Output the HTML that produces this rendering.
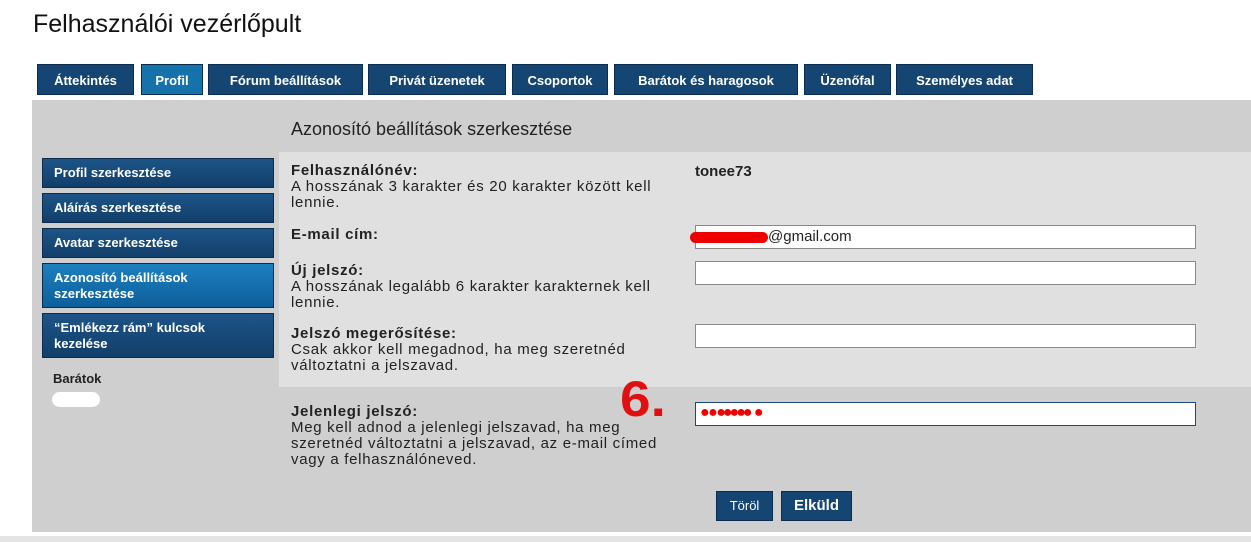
<!DOCTYPE html>
<html><head><meta charset="utf-8"><style>
body{margin:0;width:1251px;height:542px;background:#fff;font-family:"Liberation Sans",sans-serif;position:relative;overflow:hidden;color:#222}
.a{position:absolute}
h1{position:absolute;left:33px;top:10px;margin:0;font-weight:normal;font-size:25px;color:#111}
.tab{position:absolute;top:64px;height:31px;background:#154673;color:#fff;font-weight:bold;font-size:13px;line-height:31px;text-align:center;border:1px solid #0c2d4d;box-sizing:border-box}
.panel{left:32px;top:100px;width:1219px;height:432px;background:#cfcfcf}
.inner{left:279px;top:152px;width:972px;height:235px;background:#e0e0e0}
.side{position:absolute;left:42px;width:232px;background:linear-gradient(#1d5488,#123f6a);color:#fff;font-weight:bold;font-size:13px;box-sizing:border-box;padding:0 11px;border:1px solid #0c2d4d}
.lbl{position:absolute;left:291px;font-size:15px;line-height:16px;width:370px;letter-spacing:0.7px}
.lbl b{display:block}
.inp{position:absolute;left:695px;width:501px;height:24px;background:#fff;border:1px solid #8a8a8a;box-sizing:border-box;font-size:15px;line-height:22px;padding-left:4px}
.btn{position:absolute;top:491px;height:30px;background:#154673;color:#fff;border:1px solid #0c2d4d;box-sizing:border-box;text-align:center;line-height:28px}
</style></head><body>
<h1>Felhasználói vezérlőpult</h1>
<div class="tab" style="left:37px;width:97px">Áttekintés</div>
<div class="tab" style="left:141px;width:62px;background:#1572ab">Profil</div>
<div class="tab" style="left:208px;width:155px">Fórum beállítások</div>
<div class="tab" style="left:368px;width:138px">Privát üzenetek</div>
<div class="tab" style="left:512px;width:96px">Csoportok</div>
<div class="tab" style="left:614px;width:184px">Barátok és haragosok</div>
<div class="tab" style="left:804px;width:87px">Üzenőfal</div>
<div class="tab" style="left:896px;width:137px">Személyes adat</div>
<div class="a panel"></div>
<div class="a inner"></div>
<div class="a" style="left:291px;top:119px;font-size:18px;color:#222">Azonosító beállítások szerkesztése</div>
<div class="side" style="top:158px;height:30px;line-height:28px">Profil szerkesztése</div>
<div class="side" style="top:193px;height:30px;line-height:28px">Aláírás szerkesztése</div>
<div class="side" style="top:228px;height:30px;line-height:28px">Avatar szerkesztése</div>
<div class="side" style="top:263px;height:45px;line-height:16px;padding-top:6px;background:linear-gradient(#1d7fc0,#0e5f99)">Azonosító beállítások szerkesztése</div>
<div class="side" style="top:313px;height:45px;line-height:16px;padding-top:6px">“Emlékezz rám” kulcsok kezelése</div>
<div class="a" style="left:53px;top:371px;font-weight:bold;font-size:13px">Barátok</div>
<div class="a" style="left:52px;top:392px;width:48px;height:15px;background:#fff;border-radius:8px"></div>
<div class="lbl" style="top:163px"><b>Felhasználónév:</b>A hosszának 3 karakter és 20 karakter között kell lennie.</div>
<div class="a" style="left:695px;top:163px;font-weight:bold;font-size:15px">tonee73</div>
<div class="lbl" style="top:227px"><b>E-mail cím:</b></div>
<div class="inp" style="top:225px;padding-left:72px">@gmail.com</div>
<div class="a" style="left:690px;top:232px;width:78px;height:11px;background:#e00;border-radius:6px"></div>
<div class="lbl" style="top:263px"><b>Új jelszó:</b>A hosszának legalább 6 karakter karakternek kell lennie.</div>
<div class="inp" style="top:261px"></div>
<div class="lbl" style="top:326px"><b>Jelszó megerősítése:</b>Csak akkor kell megadnod, ha meg szeretnéd változtatni a jelszavad.</div>
<div class="inp" style="top:324px"></div>
<div class="lbl" style="top:404px"><b>Jelenlegi jelszó:</b>Meg kell adnod a jelenlegi jelszavad, ha meg szeretnéd változtatni a jelszavad, az e-mail címed vagy a felhasználóneved.</div>
<div class="a" style="left:620px;top:370px;font-size:50px;font-weight:bold;color:#e01010;font-family:'Liberation Sans Narrow','Liberation Sans',sans-serif;transform:scaleX(1.1);transform-origin:left">6.</div>
<div class="inp" style="top:402px;border:1px solid #1a4a7a;color:#e00;font-size:16px;line-height:20px;letter-spacing:-3px">● ● ●●●●● &nbsp;&nbsp;●</div>
<div class="btn" style="left:716px;width:57px;font-size:13px">Töröl</div>
<div class="btn" style="left:781px;width:71px;font-weight:bold;font-size:15px">Elküld</div>
<div class="a" style="left:0;top:536px;width:1251px;height:6px;background:#e4e4e4"></div>
</body></html>
